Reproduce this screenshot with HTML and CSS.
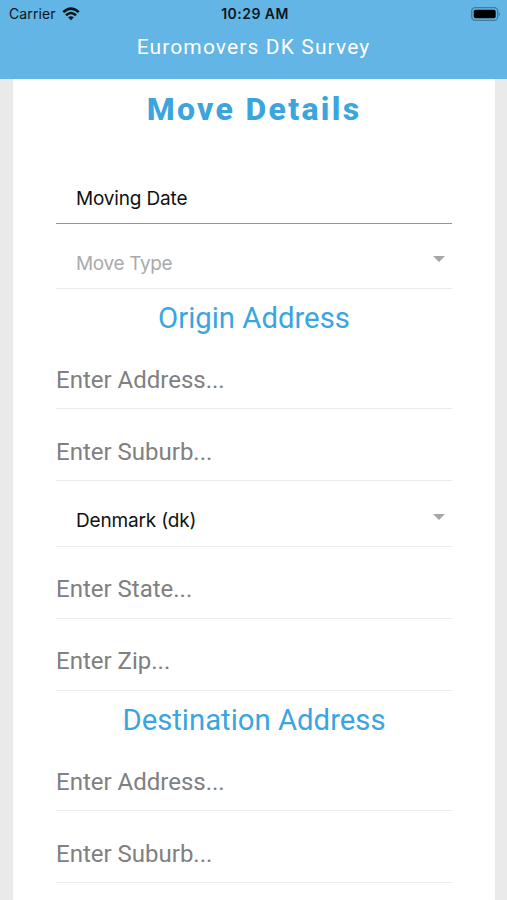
FILE: index.html
```html
<!DOCTYPE html>
<html lang="en">
<head>
<meta charset="utf-8">
<title>Euromovers DK Survey</title>
<link rel="stylesheet" href="styles.css">
</head>
<body>
<header class="header">
  <div class="status">
    <div class="carrier"><span>Carrier</span>
      <svg width="18" height="14" viewBox="0 0 20 15" fill="none" stroke="#0b161c" stroke-width="2.9"><path d="M1.4 5.4Q10-2.4 18.6 5.4M4.4 8.9Q10 3.9 15.6 8.9"/><path d="M10 14.4L6.8 11.2Q10 8.6 13.2 11.2Z" fill="#0b161c" stroke="none"/></svg>
    </div>
    <div class="time">10:29 AM</div>
    <svg class="battery" width="30" height="14" viewBox="0 0 30 14"><rect x=".7" y=".7" width="26" height="12.6" rx="3.5" fill="none" stroke="#427b9b" stroke-width="1.3"/><rect x="2.7" y="2.7" width="22" height="8.6" rx="1.8" fill="#000"/><path d="M27.8 4.7Q30 7 27.8 9.3Z" fill="#427b9b"/></svg>
  </div>
  <div class="app-title">Euromovers DK Survey</div>
</header>
<main class="card">
  <h1>Move Details</h1>
  <div class="select date"><span>Moving Date</span></div>
  <div class="select empty"><span>Move Type</span><i class="arrow"></i></div>
  <h2>Origin Address</h2>
  <div class="field">Enter Address...</div>
  <div class="field">Enter Suburb...</div>
  <div class="select country"><span>Denmark (dk)</span><i class="arrow"></i></div>
  <div class="field raised">Enter State...</div>
  <div class="field raised">Enter Zip...</div>
  <h2>Destination Address</h2>
  <div class="field">Enter Address...</div>
  <div class="field">Enter Suburb...</div>
</main>
</body>
</html>
```
FILE: styles.css
```css
* { box-sizing: border-box; }
body { margin: 0; height: 900px; overflow: hidden; background: #eaeaea; font-family: Roboto, sans-serif; }
.header { height: 79px; background: #62b5e5; }
.status { height: 28px; padding: 0 6px 1px 9px; display: grid; grid-template-columns: 1fr auto 1fr; align-items: center; font-family: Inter, sans-serif; font-size: 14px; color: #0b161c; }
.carrier { display: flex; align-items: center; gap: 6px; letter-spacing: .1px; }
.time { font-weight: 600; letter-spacing: .45px; }
.battery { justify-self: end; }
.app-title { line-height: 38px; text-align: center; font-size: 21px; letter-spacing: 1.12px; color: #fff; }
.card { height: 821px; margin: 0 12px 0 13px; padding: 0 43px; background: #fff; }
h1 { margin: 0; height: 94px; padding-top: 10px; line-height: 40px; text-align: center; font-size: 32px; font-weight: 800; letter-spacing: 2.3px; color: #3aa5df; }
h2 { margin: 0; height: 48px; line-height: 58px; text-align: center; font-size: 29.3px; font-weight: 400; color: #3aa5df; }
.select { height: 65px; padding: 14px 7px 0 20px; border-bottom: 1px solid #ebebeb; display: flex; align-items: center; justify-content: space-between; font-family: Inter, sans-serif; font-size: 19px; letter-spacing: -.17px; color: #111; }
.select.date { height: 51px; padding-top: 0; border-bottom: 1px solid #4aa9dd; }
.select.country { height: 66px; }
.empty span { color: #aaa; letter-spacing: -.35px; }
.arrow { border: 6px solid transparent; border-top-color: #a6a6a6; border-bottom: 0; margin-bottom: 8px; }
.field { height: 72px; padding-top: 14px; line-height: 58px; border-bottom: 1px solid #ebebeb; font-size: 24px; color: #808080; }
.field.raised { line-height: 56px; }
```
